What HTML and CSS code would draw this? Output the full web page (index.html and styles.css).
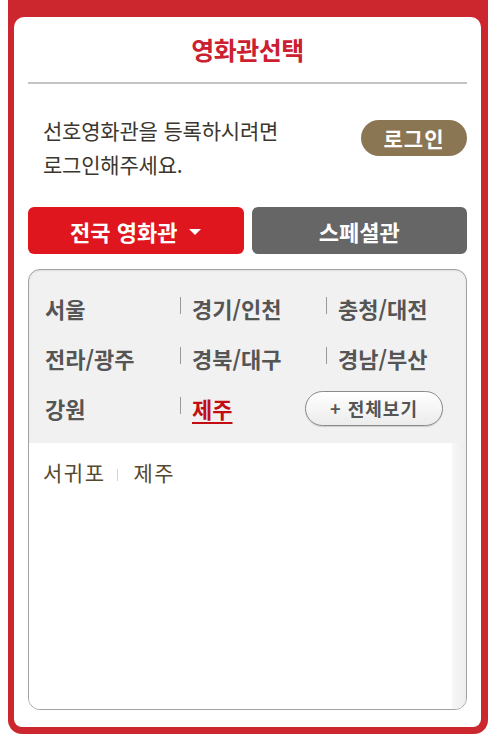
FILE: index.html
```html
<!DOCTYPE html>
<html lang="ko">
<head>
<meta charset="utf-8">
<title>영화관선택</title>
<link rel="stylesheet" href="styles.css">
</head>
<body>
<div class="frame">
  <div class="card">
    <div class="header"><h1 class="title">영화관선택</h1></div>
    <div class="info">
      <p class="info-text">선호영화관을 등록하시려면<br>로그인해주세요.</p>
      <a class="login-btn">로그인</a>
    </div>
    <div class="tabs">
      <button class="tab tab-active">전국 영화관 <span class="caret"></span></button>
      <button class="tab tab-special">스페셜관</button>
    </div>
    <div class="panel">
      <div class="regions">
        <span class="region">서울</span>
        <span class="region sep">경기/인천</span>
        <span class="region sep">충청/대전</span>
        <span class="region">전라/광주</span>
        <span class="region sep">경북/대구</span>
        <span class="region sep">경남/부산</span>
        <span class="region">강원</span>
        <span class="region sep"><span class="region-on">제주</span></span>
        <span class="region"><a class="all-btn">+ 전체보기</a></span>
      </div>
      <div class="list-wrap">
        <div class="list">
          <span class="theater">서귀포</span><span class="theater sep2">제주</span>
        </div>
        <div class="scroll-strip"></div>
      </div>
    </div>
  </div>
</div>
</body>
</html>
```

FILE: styles.css
```css
* { box-sizing: border-box; }
html, body { margin: 0; padding: 0; background: #fff; }
body {
  font-family: "Noto Sans CJK KR", "Noto Sans", sans-serif;
  width: 494px;
  height: 747px;
  overflow: hidden;
}
.frame {
  margin: 0 6px 0 8px;
  background: #cc272e;
  padding: 17px 7px 7px 6px;
  border-radius: 0 0 14px 14px;
}
.card {
  background: #fff;
  border-radius: 10px 10px 8px 8px;
  height: 710px;
  padding: 0 14px 17px;
  display: flex;
  flex-direction: column;
}
.header {
  height: 67px;
  border-bottom: 2px solid #c4c4c4;
  display: flex;
  align-items: center;
  justify-content: center;
  padding-bottom: 2px;
}
.title {
  margin: 0;
  font-size: 25px;
  font-weight: 700;
  color: #cc2030;
  letter-spacing: -0.5px;
}
.info {
  display: flex;
  justify-content: space-between;
  align-items: flex-start;
  padding: 29px 0 26px 15px;
}
.info-text {
  margin: 0;
  font-size: 21px;
  line-height: 34px;
  color: #3b372f;
  letter-spacing: -0.2px;
}
.login-btn {
  margin-top: 7px;
  width: 106px;
  height: 36px;
  border-radius: 18px;
  background: #8b7654;
  color: #fff;
  font-size: 21px;
  font-weight: 700;
  display: flex;
  align-items: center;
  justify-content: center;
  letter-spacing: 1px;
}
.tabs {
  display: flex;
  gap: 8px;
  height: 47px;
}
.tab {
  flex: 1;
  border: 0;
  border-radius: 6px;
  color: #fff;
  font-family: inherit;
  font-size: 22px;
  font-weight: 700;
  display: flex;
  align-items: center;
  justify-content: center;
  padding: 0;
}
.tab-active { background: #e0161f; }
.tab-special { background: #666; }
.caret {
  display: inline-block;
  width: 0;
  height: 0;
  border-left: 6px solid transparent;
  border-right: 6px solid transparent;
  border-top: 6px solid #fff;
  margin-left: 12px;
  margin-top: 2px;
}
.panel {
  margin-top: 15px;
  flex: 1;
  border: 1px solid #a2a2a2;
  border-radius: 12px;
  background: #f1f1f1;
  overflow: hidden;
  display: flex;
  flex-direction: column;
  box-shadow: inset 0 1px 2px rgba(0,0,0,0.08);
}
.regions {
  display: grid;
  grid-template-columns: 135px 146px 1fr;
  grid-auto-rows: 50px;
  padding: 13px 0 10px 16px;
}
.region {
  display: flex;
  align-items: center;
  font-size: 22px;
  font-weight: 700;
  color: #555;
}
.region.sep::before {
  content: "";
  display: inline-block;
  width: 1px;
  height: 17px;
  background: #999;
  margin-right: 11px;
  align-self: center;
  margin-top: -6px;
}
.region-on {
  color: #c30d12;
  text-decoration: underline;
  text-underline-offset: 4px;
}
.all-btn {
  margin-left: -21px;
  width: 138px;
  height: 35px;
  border: 1px solid #8a8a8a;
  border-radius: 18px;
  background: linear-gradient(#ffffff, #ececec);
  box-shadow: 0 1px 1px rgba(0,0,0,0.15);
  font-size: 18px;
  font-weight: 700;
  color: #555;
  display: flex;
  align-items: center;
  justify-content: center;
  letter-spacing: 1px;
}
.list-wrap {
  flex: 1;
  display: flex;
}
.list {
  flex: 1;
  background: #fff;
  padding: 12px 14px;
  font-size: 21px;
  line-height: 34px;
  color: #54492f;
  letter-spacing: 1.5px;
  align-self: stretch;
}
.theater.sep2::before {
  content: "";
  display: inline-block;
  width: 1px;
  height: 12px;
  background: #d4d4d4;
  margin: 0 15px 0 12px;
  vertical-align: 0;
}
.scroll-strip {
  width: 14px;
  background: linear-gradient(to right, #f7f7f7, #ededed);
}
```
